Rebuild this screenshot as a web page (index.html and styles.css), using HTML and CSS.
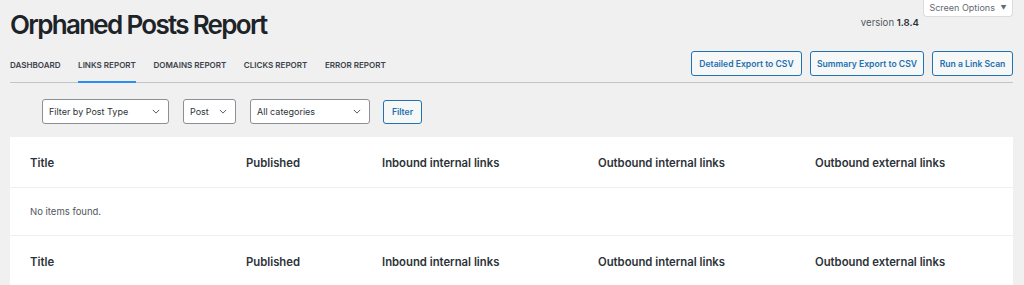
FILE: index.html
```html
<!DOCTYPE html>
<html lang="en">
<head>
    <meta charset="UTF-8">
    <meta name="viewport" content="width=device-width, initial-scale=1.0">
    <title>Orphaned Posts Report</title>
    <link rel="stylesheet" href="styles.css">
</head>
<body>

    <div class="wrap">

        <div class="page-head">
            <h1>Orphaned Posts Report</h1>
            <div class="version">version <b>1.8.4</b></div>
            <button type="button" class="screen-options">Screen Options <span class="arrow">&#9660;</span></button>
        </div>

        <div class="nav">
            <div class="tabs">
                <a class="tab">Dashboard</a>
                <a class="tab active">Links Report</a>
                <a class="tab">Domains Report</a>
                <a class="tab">Clicks Report</a>
                <a class="tab">Error Report</a>
            </div>
            <div class="actions">
                <button type="button" class="btn btn-detailed">Detailed Export to CSV</button>
                <button type="button" class="btn btn-summary">Summary Export to CSV</button>
                <button type="button" class="btn btn-scan">Run a Link Scan</button>
            </div>
        </div>

        <form class="filters">
            <div class="select select-type">Filter by Post Type <svg viewBox="0 0 10 6"><path d="M1 1l4 4 4-4"/></svg></div>
            <div class="select select-post">Post <svg viewBox="0 0 10 6"><path d="M1 1l4 4 4-4"/></svg></div>
            <div class="select select-cat">All categories <svg viewBox="0 0 10 6"><path d="M1 1l4 4 4-4"/></svg></div>
            <button type="button" class="btn btn-filter">Filter</button>
        </form>

        <div class="report">
            <div class="row head">
                <div>Title</div>
                <div>Published</div>
                <div>Inbound internal links</div>
                <div>Outbound internal links</div>
                <div>Outbound external links</div>
            </div>
            <div class="row empty">
                <div>No items found.</div>
            </div>
            <div class="row head foot">
                <div>Title</div>
                <div>Published</div>
                <div>Inbound internal links</div>
                <div>Outbound internal links</div>
                <div>Outbound external links</div>
            </div>
        </div>

    </div>

</body>
</html>
```

FILE: styles.css
```css
body {
    margin: 0;
    background: #f0f0f1;
    font-family: Inter, "Noto Sans", sans-serif;
    color: #1d2327;
}

.wrap {
    padding: 0 11px 0 10px;
}

.page-head {
    display: flex;
    align-items: flex-start;
    height: 51px;
}

h1 {
    flex: 1;
    margin: 8px 0 0;
    font-size: 26px;
    line-height: 34px;
    font-weight: 600;
    letter-spacing: -1.7px;
}

.version {
    margin: 16px 4px 0 0;
    font-size: 9.6px;
    line-height: 14px;
    color: #50575e;
}

.version b {
    color: #2c3338;
    font-weight: 600;
}

.screen-options {
    width: 90px;
    height: 17px;
    padding: 0 0 1px;
    background: #fff;
    border: 1px solid #dcdcde;
    border-top: none;
    border-radius: 0 0 4px 4px;
    font-family: inherit;
    font-size: 9px;
    color: #646970;
}

.screen-options .arrow {
    font-size: 6px;
    margin-left: 3px;
    vertical-align: 1px;
}

.nav {
    display: flex;
    justify-content: space-between;
    align-items: flex-end;
    border-bottom: 1px solid #c3c4c7;
}

.tabs {
    display: flex;
    gap: 17.5px;
}

.tab {
    padding-bottom: 10px;
    border-bottom: 2px solid transparent;
    margin-bottom: -1px;
    font-size: 8.05px;
    line-height: 12px;
    font-weight: 600;
    text-transform: uppercase;
    color: #3c434a;
}

.tab.active {
    border-bottom-color: #2b8ef0;
}

.actions {
    display: flex;
    gap: 8px;
    margin-bottom: 6px;
}

.btn {
    height: 25px;
    padding: 0;
    background: #f6f7f7;
    border: 1px solid #2271b1;
    border-radius: 3px;
    font-family: inherit;
    font-size: 8.6px;
    font-weight: 600;
    color: #2271b1;
}

.btn-detailed { width: 111px; }
.btn-summary { width: 114px; }
.btn-scan { width: 81px; }

.filters {
    display: flex;
    align-items: center;
    margin: 16px 0 13px;
    padding-left: 32px;
}

.select {
    display: flex;
    align-items: center;
    justify-content: space-between;
    box-sizing: border-box;
    height: 25px;
    padding: 0 8px 0 6px;
    margin-right: 14px;
    background: #fff;
    border: 1px solid #8c8f94;
    border-radius: 3px;
    font-size: 9px;
    color: #2c3338;
}

.select svg {
    width: 8px;
    height: 5px;
    fill: none;
    stroke: #50575e;
    stroke-width: 1.2;
}

.select-type { width: 127px; }
.select-post { width: 53px; }
.select-cat { width: 120px; margin-right: 13px; }

.btn-filter {
    width: 39px;
    height: 24px;
}

.report {
    background: #fff;
    height: 160px;
}

.row {
    display: grid;
    grid-template-columns: 216px 136px 216px 217px 1fr;
    align-items: center;
    padding-left: 20px;
    border-bottom: 1px solid #f0f0f1;
}

.head {
    height: 49px;
    padding-top: 1px;
    font-size: 11.3px;
    font-weight: 600;
    color: #2c3338;
}

.empty {
    height: 47px;
    font-size: 9.5px;
    color: #50575e;
}

.foot {
    border-bottom: none;
}
```
